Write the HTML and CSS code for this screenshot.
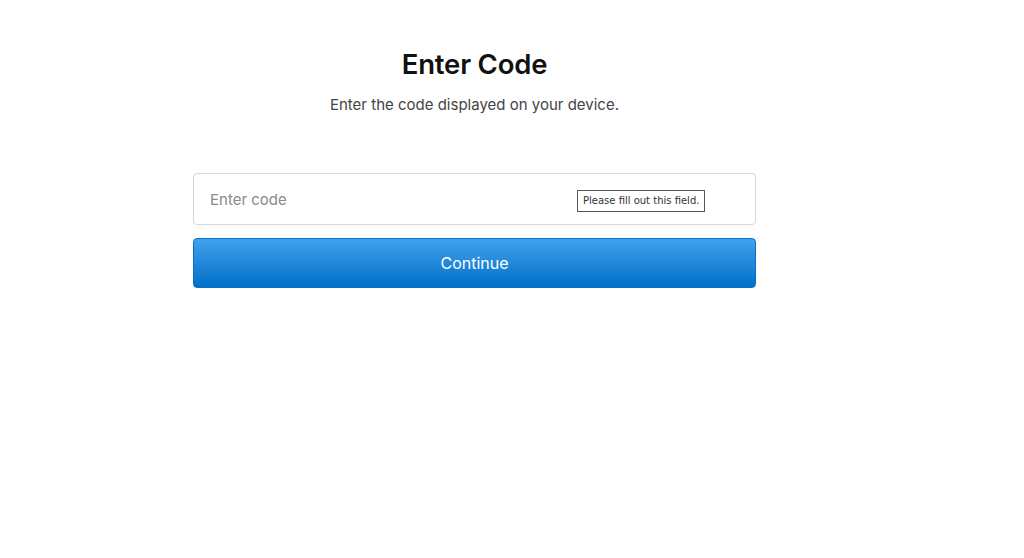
FILE: index.html
```html
<!DOCTYPE html>
<html lang="en">
<head>
<meta charset="utf-8">
<title>Enter Code</title>
<link rel="stylesheet" href="styles.css">
</head>
<body>
<main class="page">
  <section class="panel">
    <h1 class="title">Enter Code</h1>
    <p class="subtitle">Enter the code displayed on your device.</p>
    <form class="form">
      <div class="field">
        <input class="input" type="text" placeholder="Enter code">
        <div class="tip">Please fill out this field.</div>
      </div>
      <button class="btn" type="button">Continue</button>
    </form>
  </section>
</main>
</body>
</html>
```
FILE: styles.css
```css
html, body {
  margin: 0;
  padding: 0;
  background: #fff;
}
body {
  font-family: "Inter", "Liberation Sans", sans-serif;
  color: #111;
}
.page {
  padding-left: 193px;
  padding-top: 45px;
}
.panel {
  width: 563px;
  display: flex;
  flex-direction: column;
}
.title {
  margin: 0;
  text-align: center;
  font-size: 27.5px;
  font-weight: 600;
  line-height: 38px;
  color: #111;
  letter-spacing: -0.2px;
}
.subtitle {
  margin: 12px 0 0;
  text-align: center;
  font-size: 15px;
  line-height: 20px;
  color: #444;
}
.form {
  margin-top: 58px;
  display: flex;
  flex-direction: column;
  gap: 13px;
}
.field {
  position: relative;
}
.input {
  box-sizing: border-box;
  width: 100%;
  height: 52px;
  border: 1px solid #d6d6d6;
  border-radius: 4px;
  padding: 0 16px;
  font-family: "Inter", "Liberation Sans", sans-serif;
  font-size: 15px;
  color: #333;
  outline: none;
}
.input::placeholder {
  color: #8a8a8a;
}
.tip {
  position: absolute;
  left: 384px;
  top: 17px;
  box-sizing: border-box;
  height: 22px;
  padding: 0 5px;
  border: 1px solid #575757;
  background: #fff;
  font-family: "DejaVu Sans", "Liberation Sans", sans-serif;
  font-size: 10px;
  line-height: 20px;
  color: #333;
  white-space: nowrap;
}
.btn {
  height: 50px;
  border: 1px solid #0a6fc4;
  border-radius: 4px;
  background: linear-gradient(to bottom, #42a1ec, #0070c9);
  color: #fff;
  font-family: "Inter", "Liberation Sans", sans-serif;
  font-size: 16px;
  cursor: pointer;
}
```
